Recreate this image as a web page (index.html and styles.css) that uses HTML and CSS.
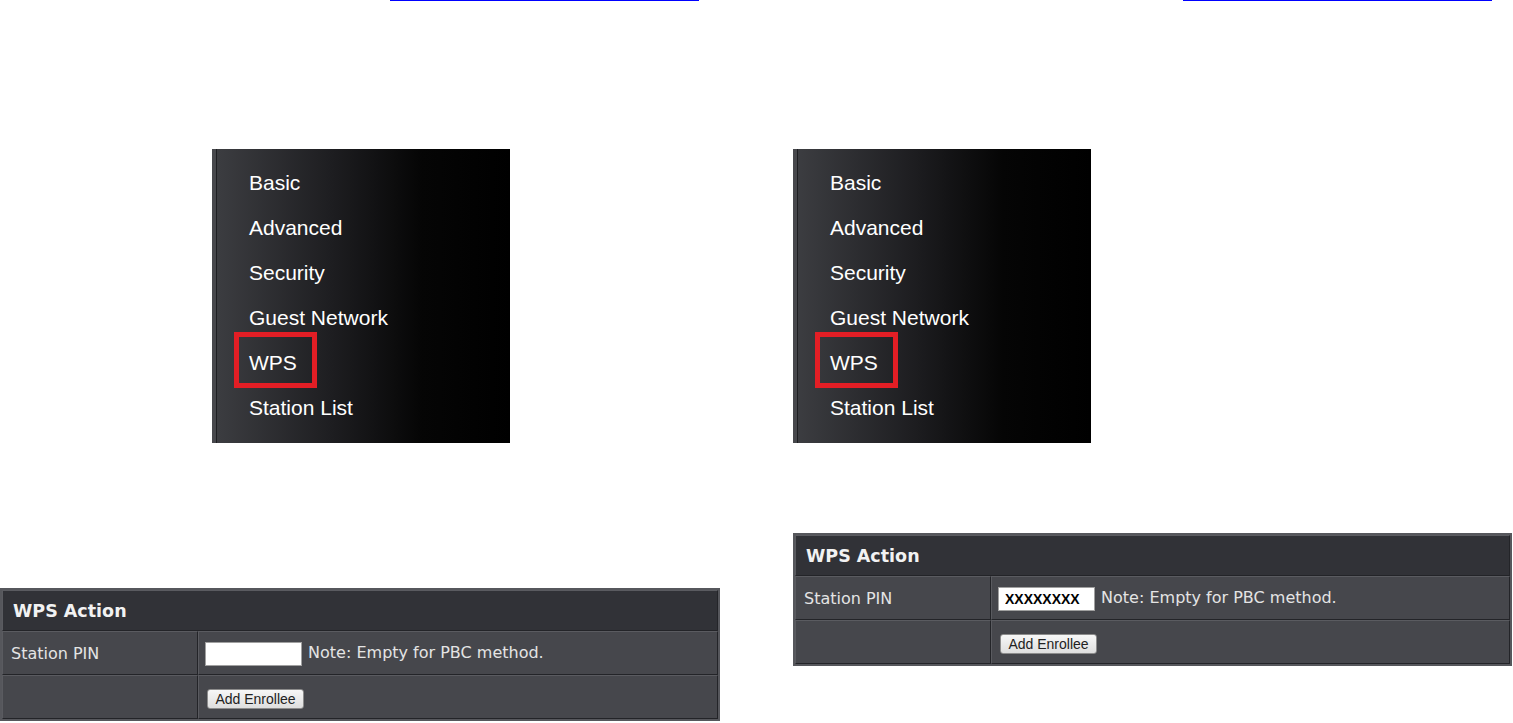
FILE: index.html
```html
<!DOCTYPE html>
<html>
<head>
<title>WPS Setup</title>
<link rel="stylesheet" href="styles.css">
</head>
<body>
<div class="page">

<div class="column">
<a class="link-line" href="#"></a>
<div class="menu menu-left">
<a href="#">Basic</a>
<a href="#">Advanced</a>
<a href="#">Security</a>
<a href="#">Guest Network</a>
<a href="#">WPS</a>
<a href="#">Station List</a>
<span class="highlight"></span>
</div>
<table class="wps-table table-left">
<tr><th colspan="2">WPS Action</th></tr>
<tr>
<td class="label">Station PIN</td>
<td><input type="text" class="pin"> Note: Empty for PBC method.</td>
</tr>
<tr>
<td class="label"></td>
<td><button class="enroll">Add Enrollee</button></td>
</tr>
</table>
</div>

<div class="column">
<a class="link-line" href="#"></a>
<div class="menu">
<a href="#">Basic</a>
<a href="#">Advanced</a>
<a href="#">Security</a>
<a href="#">Guest Network</a>
<a href="#">WPS</a>
<a href="#">Station List</a>
<span class="highlight"></span>
</div>
<table class="wps-table table-right">
<tr><th colspan="2">WPS Action</th></tr>
<tr>
<td class="label">Station PIN</td>
<td><input type="text" class="pin" value="XXXXXXXX"> Note: Empty for PBC method.</td>
</tr>
<tr>
<td class="label"></td>
<td><button class="enroll">Add Enrollee</button></td>
</tr>
</table>
</div>

</div>
</body>
</html>
```

FILE: styles.css
```css
html{
overflow:hidden;
}
body{
margin:0;
background:#fff;
font-family:"DejaVu Sans", Verdana, sans-serif;
}
.page{
display:grid;
grid-template-columns:720px 720px;
column-gap:73px;
}
.column{
display:flex;
flex-direction:column;
}
.link-line{
display:block;
margin-left:390px;
width:309px;
height:0;
border-top:1px solid #0000ff;
}

/* side menu picture */
.menu{
position:relative;
box-sizing:border-box;
width:298px;
height:294px;
margin-top:148px;
padding:11px 0 0 33px;
border-left:4px solid #47484c;
box-shadow:inset 1px 0 0 #1e1f22;
background:linear-gradient(to right,#3c3d41 0%,#1d1d20 40%,#050505 70%,#000 100%);
}
.menu-left{
margin-left:212px;
}
.menu a{
display:block;
height:45px;
line-height:45px;
font-family:"Liberation Sans", Arial, sans-serif;
font-size:21px;
color:#fff;
text-decoration:none;
}
.highlight{
position:absolute;
left:18px;
top:183px;
box-sizing:border-box;
width:83px;
height:56px;
border:5px solid #e31e25;
}

/* WPS action table */
.wps-table{
border-collapse:separate;
border-spacing:0;
border:2px solid #56575c;
background:#46474c;
color:#e4e4e4;
font-size:16px;
}
.table-left{
width:720px;
margin-top:145px;
}
.table-right{
width:719px;
margin-top:90px;
}
.wps-table th,
.wps-table td{
border-top:1px solid #5a5b60;
border-left:1px solid #5a5b60;
border-right:1px solid #232428;
border-bottom:1px solid #232428;
text-align:left;
}
.wps-table th{
height:39px;
padding:0 0 0 10px;
background:#313237;
color:#f2f2f2;
font-size:17.5px;
font-weight:bold;
}
.wps-table td{
height:42px;
padding:0 0 0 6px;
vertical-align:middle;
}
.wps-table td.label{
width:186px;
padding-left:8px;
}
.pin{
box-sizing:border-box;
width:97px;
height:24px;
margin:2px 1px 0 0;
padding:0 6px;
vertical-align:middle;
border:1px solid #a0a0a0;
background:#fff;
font-family:"Liberation Sans", Arial, sans-serif;
font-size:14px;
font-weight:bold;
color:#000;
}
.enroll{
box-sizing:border-box;
width:97px;
height:20px;
margin:4px 0 0 2px;
padding:0;
border:1px solid #8c8c8c;
border-radius:3px;
background:linear-gradient(to bottom,#f7f7f7,#dedede);
font-family:"Liberation Sans", Arial, sans-serif;
font-size:14px;
color:#222;
}
```
